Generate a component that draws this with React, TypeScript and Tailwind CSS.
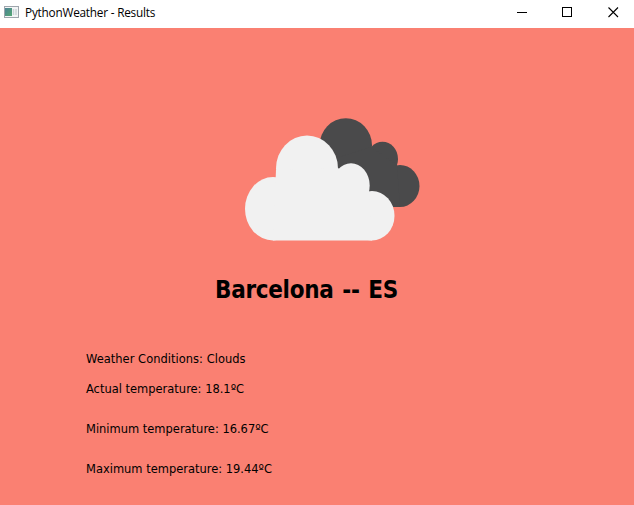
import React from "react";

const uiFont = "font-['DejaVu_Sans_Condensed','DejaVu_Sans',sans-serif] [font-stretch:condensed]";

function AppIcon() {
  return (
    <svg className="block h-3 w-[15px] shrink-0" viewBox="0 0 15 12">
      <defs>
        <linearGradient id="pane" x1="0" y1="0" x2="1" y2="1">
          <stop offset="0" stopColor="#4c8294" />
          <stop offset="1" stopColor="#55a873" />
        </linearGradient>
      </defs>
      <rect x="0.5" y="0.5" width="14" height="11" fill="#f3f5f6" stroke="#9ea5ac" />
      <rect x="1" y="2" width="7" height="8" fill="url(#pane)" />
      <path d="M9.5 3v6M12 3v6" stroke="#cbd5d8" strokeWidth="1.5" />
    </svg>
  );
}

function TitleBar() {
  return (
    <header className="flex h-7 items-start bg-white pl-1 text-black">
      <div className="-mt-px flex h-[25px] items-center gap-1.5">
        <AppIcon />
        <span className="whitespace-nowrap font-['Open_Sans',sans-serif] text-[11.8px] leading-4 tracking-[-0.22px] [font-stretch:normal]">
          PythonWeather - Results
        </span>
      </div>
      <div className="ml-auto flex h-[25px]">
        <button aria-label="Minimize" className="flex w-[45px] items-center justify-center">
          <svg className="h-[11px] w-[11px]" viewBox="0 0 11 11">
            <path d="M1 5.5h10" stroke="#000" />
          </svg>
        </button>
        <button aria-label="Maximize" className="flex w-[45px] items-center justify-center">
          <svg className="h-[11px] w-[11px]" viewBox="0 0 11 11">
            <rect x="1.5" y="0.5" width="9" height="9" fill="none" stroke="#000" />
          </svg>
        </button>
        <button aria-label="Close" className="flex w-[45px] items-center justify-center pl-[3px]">
          <svg className="h-[11px] w-[11px]" viewBox="0 0 11 11">
            <path d="M0.5 0.5l9.5 9.5M10 0.5l-9.5 9.5" stroke="#000" strokeWidth="1.1" />
          </svg>
        </button>
      </div>
    </header>
  );
}

function Clouds() {
  return (
    <svg className="ml-[244px] block h-[124px] w-[177px]" viewBox="244 117 177 124">
      <g fill="#4a4a4b">
        <ellipse cx="345.8" cy="145.3" rx="26.2" ry="27" />
        <ellipse cx="382.5" cy="159" rx="15.5" ry="17.2" />
        <ellipse cx="400" cy="186" rx="19.5" ry="21" />
        <path d="M330 160L371 147L397 165L400 207H350Z" />
      </g>
      <g fill="#f1f1f1">
        <ellipse cx="273" cy="208.8" rx="28" ry="31.7" />
        <ellipse cx="307" cy="168.5" rx="31" ry="33" />
        <ellipse cx="351" cy="185.5" rx="18.7" ry="22.3" />
        <ellipse cx="372" cy="215.8" rx="22.5" ry="24.7" />
        <path d="M276 170L338 168L369 191L372 240.5H273Z" />
      </g>
    </svg>
  );
}

export default function App() {
  return (
    <div className={`flex h-[505px] w-[634px] flex-col overflow-hidden bg-[#fa8072] text-black ${uiFont}`}>
      <TitleBar />
      <main className="flex flex-1 flex-col pt-[89px]">
        <Clouds />
        <h1 className="ml-[215px] mt-[33px] whitespace-nowrap text-[24px] font-bold leading-8 tracking-[-0.3px] [word-spacing:1.5px]">
          Barcelona -- ES
        </h1>
        <div className="ml-[86px] mt-[43px] flex flex-col whitespace-nowrap text-[12.75px] leading-5">
          <p className="tracking-[0.03px]">Weather Conditions: Clouds</p>
          <p className="mt-2.5">Actual temperature: 18.1ºC</p>
          <p className="mt-5">Minimum temperature: 16.67ºC</p>
          <p className="mt-5">Maximum temperature: 19.44ºC</p>
        </div>
      </main>
    </div>
  );
}
